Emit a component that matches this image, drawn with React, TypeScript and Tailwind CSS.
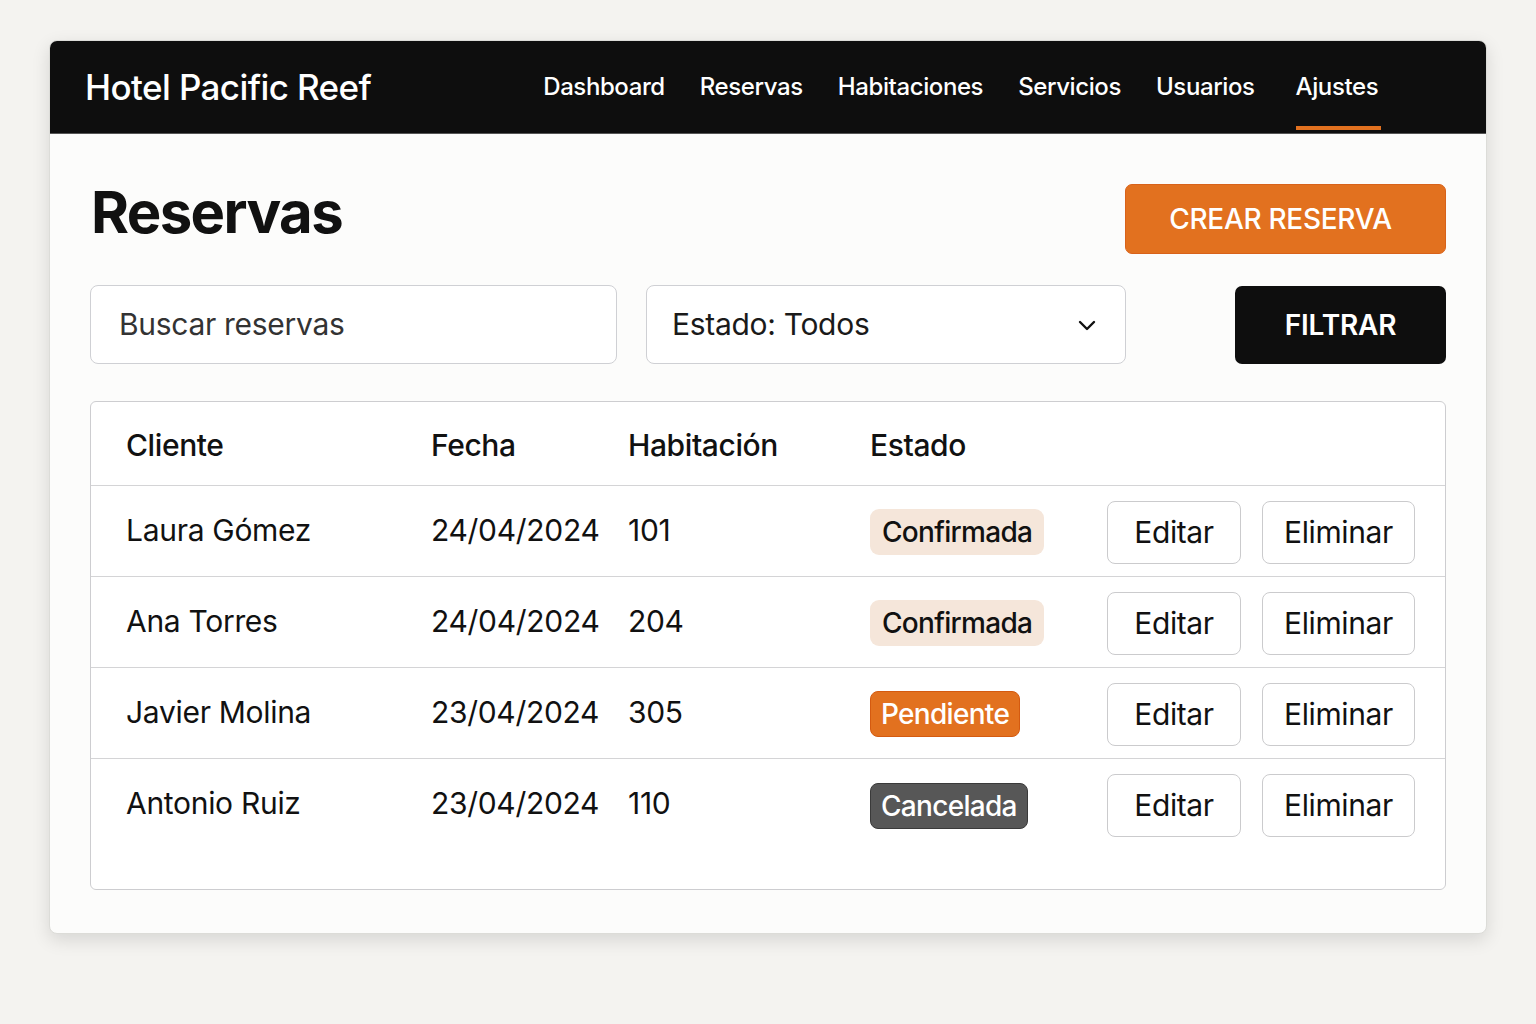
import React from "react";

const rows = [
  { name: "Laura Gómez", date: "24/04/2024", room: "101", status: "Confirmada" },
  { name: "Ana Torres", date: "24/04/2024", room: "204", status: "Confirmada" },
  { name: "Javier Molina", date: "23/04/2024", room: "305", status: "Pendiente" },
  { name: "Antonio Ruiz", date: "23/04/2024", room: "110", status: "Cancelada" },
];

function Badge({ status }: { status: string }) {
  if (status === "Confirmada")
    return (
      <span className="inline-flex h-[46px] items-center rounded-[9px] bg-[#f5e6da] px-[12px] text-[28px] font-medium tracking-[-0.7px] text-[#111]">
        Confirmada
      </span>
    );
  if (status === "Pendiente")
    return (
      <span className="inline-flex h-[46px] items-center rounded-[8px] border border-[#d45a10] bg-[#e2711f] px-[10px] text-[28px] font-medium tracking-[-0.7px] text-white">
        Pendiente
      </span>
    );
  return (
    <span className="inline-flex h-[46px] items-center rounded-[8px] border border-[#3a3a3a] bg-[#575757] px-[10px] text-[28px] font-medium tracking-[-0.7px] text-white">
      Cancelada
    </span>
  );
}

export default function App() {
  const nav = ["Dashboard", "Reservas", "Habitaciones", "Servicios", "Usuarios", "Ajustes"];
  return (
    <div
      className="min-h-[1024px] w-full bg-[#f4f3f0] pt-[40px] pl-[49px]"
      style={{ fontFamily: "Inter, 'Noto Sans', sans-serif" }}
    >
      <div className="w-[1438px] h-[894px] overflow-hidden rounded-[8px] bg-[#fcfcfb] shadow-[0_6px_18px_rgba(0,0,0,0.12)] border border-[#dcdcd8]">
        <header className="flex h-[93px] items-stretch bg-[#0e0e0e] border-b border-[#555]">
          <div className="flex items-center pl-[35px] text-[35px] font-medium tracking-[-0.6px] text-white">
            Hotel Pacific Reef
          </div>
          <nav className="ml-[172px] flex items-stretch gap-[35px] text-[24px] font-medium tracking-[-0.4px] text-white">
            {nav.map((n) => (
              <div key={n} className={"relative flex items-center " + (n === "Ajustes" ? "ml-[6px]" : "")}>
                {n}
                {n === "Ajustes" && (
                  <div className="absolute bottom-[3px] left-0 right-[-3px] h-[4px] bg-[#e2711f]" />
                )}
              </div>
            ))}
          </nav>
        </header>

        <main className="px-[40px]">
          <div className="flex items-start justify-between pt-[50px]">
            <h1 className="ml-[1px] mt-[-2px] text-[58px] font-bold leading-[60px] tracking-[-1.6px] text-[#111]">Reservas</h1>
            <button className="h-[70px] w-[321px] rounded-[7px] border border-[#d8621a] bg-[#e2711f] pr-[10px] text-[28px] font-medium tracking-[-0.3px] text-white">
              CREAR RESERVA
            </button>
          </div>

          <div className="mt-[31px] flex items-center">
            <div className="flex h-[79px] w-[527px] items-center rounded-[8px] border border-[#cfd0d4] bg-white pl-[28px] text-[30px] tracking-[-0.3px] text-[#333]">
              Buscar reservas
            </div>
            <div className="ml-[29px] flex h-[79px] w-[480px] items-center justify-between rounded-[8px] border border-[#cfd0d4] bg-white pl-[25px] pr-[26px] text-[30px] tracking-[-0.3px] text-[#1a1a1a]">
              <span>Estado: Todos</span>
              <svg width="24" height="24" viewBox="0 0 24 24" fill="none" stroke="#111" strokeWidth="2.4" strokeLinecap="round" strokeLinejoin="round">
                <path d="M5 9l7 7 7-7" />
              </svg>
            </div>
            <button className="ml-auto h-[78px] w-[211px] rounded-[7px] bg-[#0e0e0e] text-[28px] font-semibold tracking-[-0.2px] text-white">
              FILTRAR
            </button>
          </div>

          <div className="mt-[37px] h-[489px] rounded-[6px] border border-[#cdcdd0] bg-white">
            <div className="grid h-[84px] grid-cols-[305px_197px_242px_1fr] items-center border-b border-[#d4d4d6] pl-[35px] text-[30px] font-medium tracking-[-0.4px] text-[#111]">
              <div className="mt-[4px]">Cliente</div>
              <div className="mt-[4px]">Fecha</div>
              <div className="mt-[4px]">Habitación</div>
              <div className="mt-[4px]">Estado</div>
            </div>
            {rows.map((r, i) => (
              <div
                key={r.name}
                className={
                  "grid h-[91px] grid-cols-[305px_197px_242px_237px_1fr] items-center pl-[35px] text-[30px] tracking-[-0.3px] text-[#111] " +
                  (i < rows.length - 1 ? "border-b border-[#d4d4d6]" : "")
                }
              >
                <div className="-mt-[2px]">{r.name}</div>
                <div className="-mt-[2px]">{r.date}</div>
                <div className="-mt-[2px]">{r.room}</div>
                <div className="mt-[2px]">
                  <Badge status={r.status} />
                </div>
                <div className="mt-[2px] flex gap-[21px]">
                  <button className="h-[63px] w-[134px] rounded-[8px] border border-[#cbcbcd] bg-white text-[30px] tracking-[-0.4px] text-[#111]">
                    Editar
                  </button>
                  <button className="h-[63px] w-[153px] rounded-[8px] border border-[#cbcbcd] bg-white text-[30px] tracking-[-0.4px] text-[#111]">
                    Eliminar
                  </button>
                </div>
              </div>
            ))}
          </div>
        </main>
      </div>
    </div>
  );
}
